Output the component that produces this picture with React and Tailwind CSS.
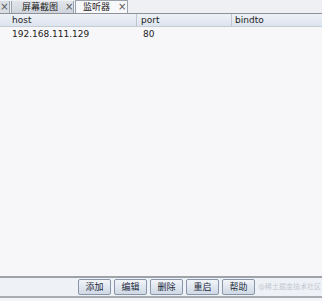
import React from 'react';

const buttons = ['添加', '编辑', '删除', '重启', '帮助'];

const Close = () => (
  <span className="text-[10px] leading-none text-[#555]">×</span>
);

const App = () => {
  return (
    <div
      className="w-[322px] h-[301px] flex flex-col bg-[#f4f5f8] text-[#222] overflow-hidden"
      style={{ fontFamily: '"DejaVu Sans", "Noto Sans CJK SC", sans-serif' }}
    >
      {/* tab strip */}
      <div className="h-[13px] flex items-end bg-[#eef0f4] shrink-0 whitespace-nowrap">
        <div className="h-[12px] w-[10px] flex items-center justify-center bg-[#d9dde4] border-r border-[#9da3ad]">
          <Close />
        </div>
        <div className="h-[12px] w-[63px] ml-[1px] flex items-center gap-[7px] pl-[10px] bg-gradient-to-b from-[#e2e5eb] to-[#cfd4dc] border-x border-[#9da3ad]">
          <span className="text-[9px] leading-none">屏幕截图</span>
          <Close />
        </div>
        <div className="h-[13px] w-[53px] ml-[1px] flex items-center gap-[8px] pl-[7px] bg-[#f7f8fa] border-x border-t border-[#9da3ad]">
          <span className="text-[9px] leading-none">监听器</span>
          <Close />
        </div>
      </div>

      {/* table */}
      <div className="flex-1 flex flex-col bg-[#f7f7f9] border-t border-[#8e939b]">
        <div className="h-[13px] grid grid-cols-[137px_95px_1fr] bg-gradient-to-b from-[#eef2f7] to-[#dce4ee] border-b border-[#c4ccd8] text-[9px] leading-none">
          <div className="pl-[12px] flex items-center border-r border-[#c0c6cf]">host</div>
          <div className="pl-[4px] flex items-center border-r border-[#c0c6cf]">port</div>
          <div className="pl-[3px] flex items-center">bindto</div>
        </div>
        <div className="h-[15px] grid grid-cols-[137px_95px_1fr] text-[9px] leading-none">
          <div className="pl-[12px] flex items-center">192.168.111.129</div>
          <div className="pl-[6px] flex items-center">80</div>
          <div />
        </div>
      </div>

      {/* button bar */}
      <div className="h-[22px] shrink-0 flex items-center gap-[3px] pl-[78px] bg-[#eef1f6] border-t-2 border-[#9ea3aa] border-b-2 border-b-[#a9adb3] relative">
        {buttons.map((b) => (
          <button
            key={b}
            className="h-[16px] w-[33px] flex items-center justify-center rounded-[2px] border border-[#8796ab] bg-gradient-to-b from-[#f2f5f9] to-[#cfd8e4] text-[9px] leading-none text-[#1d2a3a]"
          >
            {b}
          </button>
        ))}
        <span className="absolute left-[258px] top-[6px] whitespace-nowrap text-[7px] leading-none text-[#c4c8cf]">
          @稀土掘金技术社区
        </span>
      </div>
      <div className="h-[3px] shrink-0 bg-[#f4f5f8]" />
    </div>
  );
};

export default App;
